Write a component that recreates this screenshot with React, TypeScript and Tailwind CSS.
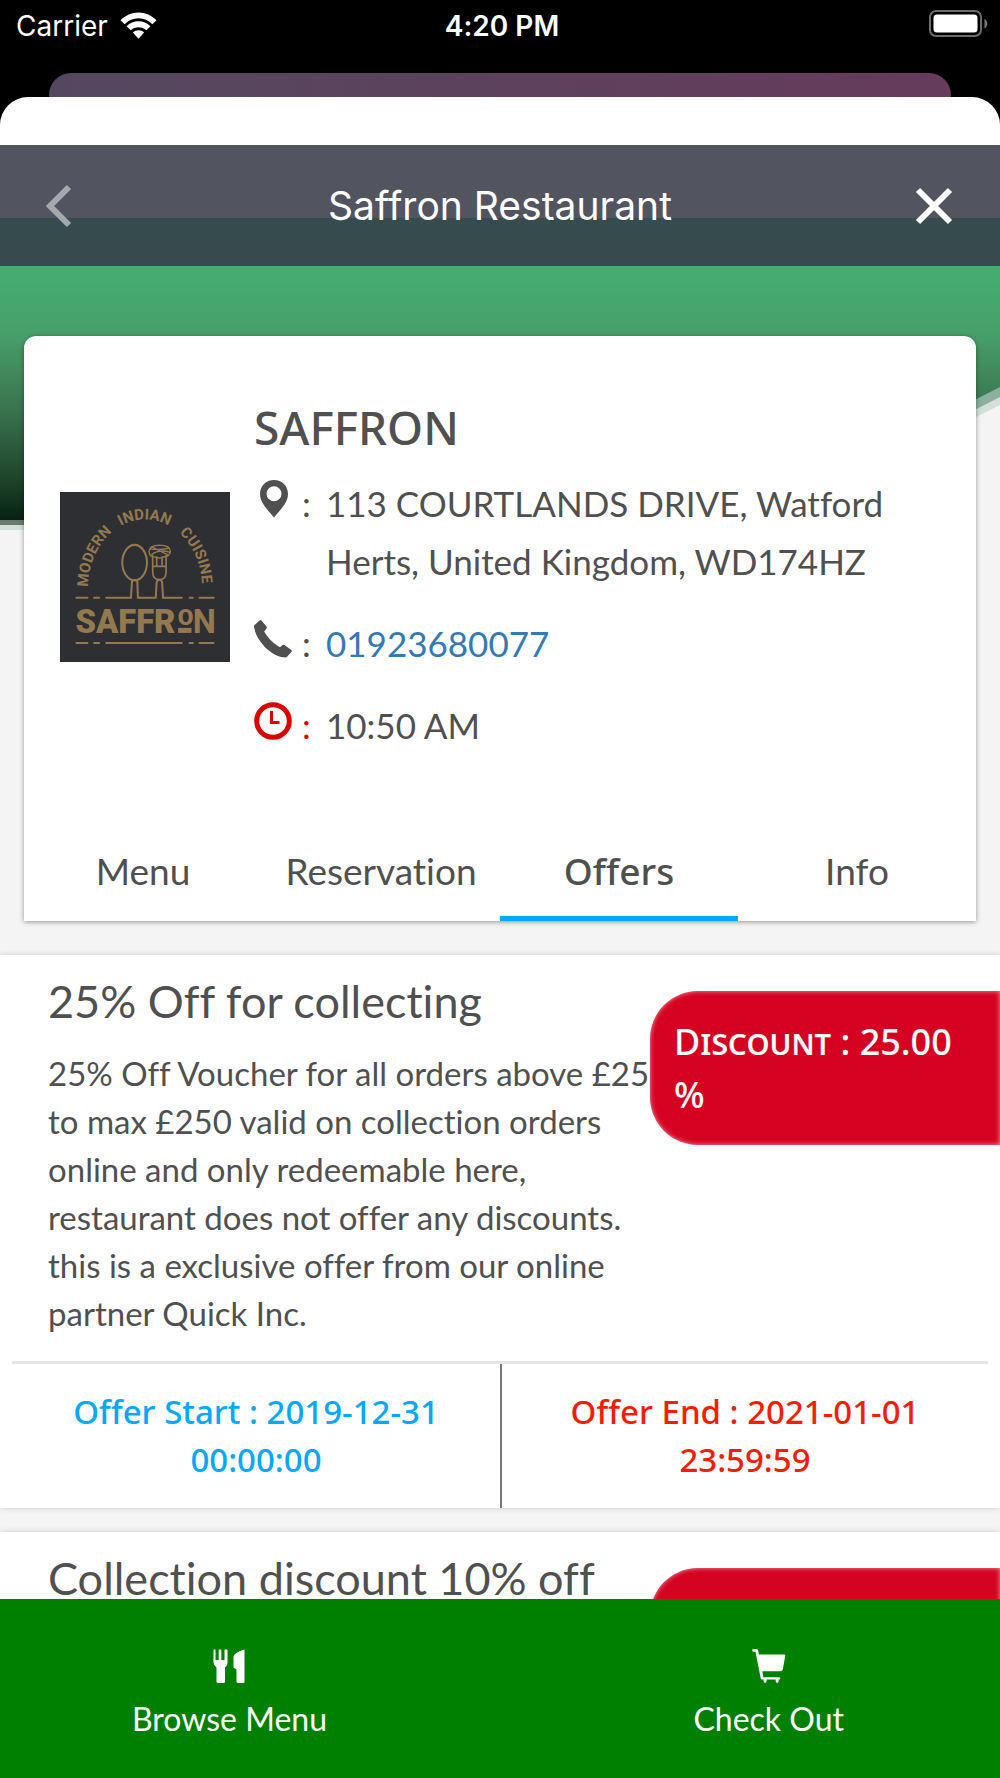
import { useState } from "react";

type Offer = {
  title: string;
  description: string;
  discount: string;
  start: [string, string];
  end: [string, string];
};

const tabs = ["Menu", "Reservation", "Offers", "Info"];

const offers: Offer[] = [
  {
    title: "25% Off for collecting",
    description:
      "25% Off Voucher for all orders above £25 to max £250 valid on collection orders online and only redeemable here, restaurant does not offer any discounts. this is a exclusive offer from our online partner Quick Inc.",
    discount: "25.00",
    start: ["2019-12-31", "00:00:00"],
    end: ["2021-01-01", "23:59:59"],
  },
  {
    title: "Collection discount 10% off",
    description: "",
    discount: "10.00",
    start: ["2019-12-31", "00:00:00"],
    end: ["2021-01-01", "23:59:59"],
  },
];

function WifiIcon() {
  return (
    <svg width="37" height="28" viewBox="0 0 37 28" fill="#fff" aria-hidden="true">
      <path d="M0.5 8.2C5.5 3.2 11.6 0.4 18.5 0.4S31.500 3.2 36.500 8.200L32.400 12.200C28.600 8.500 23.900 6.300 18.500 6.300S8.400 8.500 4.600 12.200Z" />
      <path d="M6.600 14.200C9.900 11.100 13.900 9.300 18.500 9.300S27.100 11.100 30.400 14.200L26.300 18.200C24.100 16.300 21.500 15.200 18.500 15.200S12.900 16.300 10.700 18.200Z" />
      <path d="M12.900 20.400C14.500 19 16.400 18.300 18.500 18.300S22.500 19 24.100 20.400L18.500 26.700Z" />
    </svg>
  );
}

function BatteryIcon() {
  return (
    <svg width="59" height="28" viewBox="0 0 59 28" aria-hidden="true">
      <rect x="1" y="1" width="51" height="25" rx="6" fill="none" stroke="#6b6b6b" strokeWidth="2" />
      <rect x="4.500" y="4.500" width="44" height="18" rx="3.500" fill="#fff" />
      <path d="M55.500 9V18.500C59.200 17 59.200 10.500 55.500 9Z" fill="#7a7a7a" />
    </svg>
  );
}

function MarkerIcon() {
  return (
    <svg className="ml-1.5" width="28" height="38" viewBox="0 0 28 38" fill="currentColor" aria-hidden="true">
      <path
        fillRule="evenodd"
        d="M14 0C6 0 0 6 0 14C0 22 6 28 14 37.500C22 28 28 22 28 14C28 6 22 0 14 0ZM14 6.200A7.500 7.500 0 1 1 14 21.200A7.500 7.500 0 1 1 14 6.200Z"
      />
    </svg>
  );
}

function PhoneIcon() {
  return (
    <svg width="38" height="38" viewBox="0 0 38 38" fill="currentColor" aria-hidden="true">
      <path d="M0.300 5.200L5.600 0.500C6.200 0 7 0 7.500 0.600L12.600 6.700C13 7.300 13 7.900 12.600 8.400L10.200 11.400C13.500 17.500 19.300 23.300 26 27.200L28.600 25.100C29.200 24.700 29.900 24.700 30.500 25L37.300 30C38 30.500 38.100 31.100 37.600 31.700L33.300 36.500C32.500 37.400 31.300 37.500 29.800 37.300C23 36.600 16 32.500 10.500 26.500C4.500 20 0.700 12.800 0.100 6.800C0 6 0 5.600 0.300 5.200Z" />
    </svg>
  );
}

function ClockIcon() {
  return (
    <svg width="38" height="38" viewBox="0 0 38 38" fill="none" stroke="currentColor" aria-hidden="true">
      <circle cx="19" cy="19" r="16.300" strokeWidth="5" />
      <path d="M17.500 9V20.500H25.500" strokeWidth="3" />
    </svg>
  );
}

function CutleryIcon() {
  return (
    <svg width="33" height="34" viewBox="0 0 33 34" fill="#fff" aria-hidden="true">
      <path d="M0.500 1Q1.500-0.500 2.500 1V11H5.700V1Q7-0.500 8.300 1V11H11.500V1Q13-0.500 14.500 1V13Q14.500 17 12 18.500V32.500Q12 34 10.500 34H5Q3.500 34 3.500 32.500V18.500Q0.500 16 0.500 13Z" />
      <path d="M31.500 0.500V32.500Q31.500 34 30 34H25Q23.500 34 23.500 32.500V20.500L20.500 18.500V8Q21.500 3 31.500 0.500Z" />
    </svg>
  );
}

function CartIcon() {
  return (
    <svg width="34" height="34" viewBox="0 0 34 34" fill="#fff" aria-hidden="true">
      <path d="M1.500 0H4.500Q5.600 0 6 1.200L7 5.500H32.500Q33.500 5.500 33.300 6.600L30.800 20.500Q30.300 22.300 28.500 22.300H10.300L11.300 28.200H27Q28.300 28.400 28.300 29.500Q28.300 30.600 27 30.600H26.700V32.300Q26.300 34 25.200 34Q24 34 23.700 32.300V30.600H14.600V32.300Q14.200 34 13.100 34Q12 34 11.600 32.300V30.600H10Q9 30.600 8.700 29.300L3.500 2.700H1.500Q0.200 2.500 0.200 1.300Q0.200 0.200 1.500 0Z" />
    </svg>
  );
}

function SaffronLogo() {
  return (
    <svg className="w-[170px] shrink-0" viewBox="0 0 508 508" role="img" aria-label="Saffron modern Indian cuisine">
      <rect width="508" height="508" fill="#2e2f33" />
      <path id="arc" d="M84 284A170 202 0 0 1 424 284" fill="none" />
      <g fill="#94794f" fontFamily="Roboto, sans-serif" fontWeight="700">
        <g fontSize="45">
          <text><textPath href="#arc" startOffset="0">MODERN</textPath></text>
          <text><textPath href="#arc" startOffset="217">INDIAN</textPath></text>
          <text><textPath href="#arc" startOffset="405">CUISINE</textPath></text>
        </g>
        <text y="420" fontSize="98" fontWeight="900">
          <tspan x="46">SAFFR</tspan>
        </text>
        <text x="352" y="396" fontSize="68" fontWeight="900">O</text>
        <text x="397" y="420" fontSize="98" fontWeight="700">N</text>
        <rect x="353" y="406" width="40" height="15" />
      </g>
      <g fill="none" stroke="#94794f" strokeWidth="6" strokeLinecap="round">
        <ellipse cx="223" cy="211" rx="37" ry="53" />
        <path d="M49 316H82M102 316H117M138 316H212L215 268Q223 258 231 268L233 316H286L289 268Q297 256 305 268L308 316H364M387 316H397M417 316H459" />
        <path d="M49 451H82M102 451H117M138 451H364M387 451H397M417 451H459" />
        <path d="M277 190V238Q277 262 297 262Q317 262 317 238V190M289 196V221M305 196V221M279 222H316" strokeWidth="5" />
        <path d="M266 178Q266 159 298 159Q330 159 330 178Q326 196 306 194Q298 201 288 194Q268 198 266 178ZM268 170Q292 174 326 168M274 187Q296 170 328 180M276 165L322 188" strokeWidth="4" />
      </g>
    </svg>
  );
}

function HeroShape() {
  return (
    <svg
      className="absolute inset-x-0 top-0 h-[264px] w-full"
      viewBox="0 0 1000 264"
      preserveAspectRatio="none"
      aria-hidden="true"
    >
      <defs>
        <linearGradient id="hero" x1="0" y1="0" x2="0" y2="1">
          <stop offset="0" stopColor="#44ae71" />
          <stop offset="0.280" stopColor="#489e69" />
          <stop offset="0.560" stopColor="#3a7450" />
          <stop offset="0.850" stopColor="#1d4229" />
          <stop offset="1" stopColor="#062311" />
        </linearGradient>
      </defs>
      <path d="M0 0H1000V139L750 264H0Z" fill="#d3dfd9" />
      <path d="M0 0H1000V131L750 259H0Z" fill="#8bb09b" />
      <path d="M0 254H700V259H0Z" fill="#6a7a70" />
      <path d="M0 0H1000V121L740 254H0Z" fill="url(#hero)" />
    </svg>
  );
}

function OfferCard({ offer }: { offer: Offer }) {
  return (
    <article className="bg-white shadow-[0_0_6px_rgba(0,0,0,0.16)]">
      <div className="flex items-start pb-6">
        <div className="flex-1 pt-[22px] pl-12">
          <h2 className="text-[45px] leading-[48px]">{offer.title}</h2>
          <p className="mt-6 text-[33px] leading-[48px]">{offer.description}</p>
        </div>
        <p className="mt-9 w-[35%] rounded-l-[48px] bg-[#d50321] px-6 py-6 font-['Noto_Sans'] text-[36px] leading-[53px] font-medium text-white shadow-[inset_0_0_5px_rgba(255,255,255,0.6)] [font-variant-caps:small-caps]">
          Discount : {offer.discount} %
        </p>
      </div>
      <div className="mx-3 grid grid-cols-2 border-t-3 border-[#e5e5e5] text-center font-['Noto_Sans'] text-[33px] leading-[48px] font-medium">
        <p className="py-6 text-[#03a8ff]">
          Offer Start : {offer.start[0]}
          <br />
          {offer.start[1]}
        </p>
        <p className="border-l-2 border-[#777] py-6 text-[#f91d00]">
          Offer End : {offer.end[0]}
          <br />
          {offer.end[1]}
        </p>
      </div>
    </article>
  );
}

export default function App() {
  const [activeTab, setActiveTab] = useState("Offers");

  return (
    <div className="flex h-screen flex-col bg-black font-['Lato',sans-serif] text-[#505050] [font-variant-ligatures:none]">
      <div className="grid h-[73px] shrink-0 grid-cols-3 items-start pt-[10px] pr-3 pl-4 font-['Inter'] text-[28px] leading-[32px] text-white">
        <div className="flex items-center gap-3">
          <span>Carrier</span>
          <WifiIcon />
        </div>
        <span className="text-center font-semibold">4:20 PM</span>
        <div className="flex justify-end">
          <BatteryIcon />
        </div>
      </div>
      <div className="mx-[49px] h-6 shrink-0 rounded-t-[22px] bg-linear-to-r from-[#54485f] to-[#663b5b]" />

      <div className="flex min-h-0 flex-1 flex-col overflow-hidden rounded-t-[28px] bg-white pt-12">
        <header className="flex h-[121px] shrink-0 items-center justify-between bg-[linear-gradient(#525560_60%,#364c4e_60%,#384a4e)] px-11 text-white">
          <button aria-label="Back" className="w-11 text-[#a5a9ac]">
            <svg width="28" height="44" viewBox="0 0 28 44" fill="none" stroke="currentColor" strokeWidth="6">
              <path d="M25 3L6 22L25 41" />
            </svg>
          </button>
          <h1 className="font-['Inter'] text-[39px] leading-[48px]">Saffron Restaurant</h1>
          <button aria-label="Close" className="w-11">
            <svg width="44" height="44" viewBox="0 0 44 44" fill="none" stroke="currentColor" strokeWidth="6">
              <path d="M6 6L38 38M38 6L6 38" />
            </svg>
          </button>
        </header>

        <main className="relative flex-1 overflow-y-auto bg-[#f4f4f4] [scrollbar-width:none]">
          <HeroShape />
          <section className="relative mx-6 mt-[70px] rounded-t-xl bg-white pt-16 shadow-[0_1px_5px_rgba(0,0,0,0.4)]">
            <div className="flex items-center gap-6 px-9">
              <SaffronLogo />
              <div>
                <h2 className="mb-5 font-['Noto_Sans'] text-[46px] leading-[54px] font-medium">SAFFRON</h2>
                <ul className="flex flex-col gap-6 text-[35px] leading-[58px]">
                  <li className="flex">
                    <span className="w-12 pt-1.5"><MarkerIcon /></span>
                    <span className="w-6">:</span>
                    <address className="not-italic">
                      113 COURTLANDS DRIVE, Watford
                      <br />
                      Herts, United Kingdom, WD174HZ
                    </address>
                  </li>
                  <li className="flex">
                    <span className="w-12 pt-1.5"><PhoneIcon /></span>
                    <span className="w-6">:</span>
                    <a href="tel:01923680077" className="text-[#337ab7]">01923680077</a>
                  </li>
                  <li className="flex">
                    <span className="w-12 pt-1.5 text-[#dd0000]"><ClockIcon /></span>
                    <span className="w-6 text-[#dd0000]">:</span>
                    <span>10:50 AM</span>
                  </li>
                </ul>
              </div>
            </div>
            <nav className="mt-[71px] grid grid-cols-4">
              {tabs.map((tab) => (
                <button
                  key={tab}
                  onClick={() => setActiveTab(tab)}
                  className={
                    tab === activeTab
                      ? "h-24 border-b-5 border-[#03a8ff] font-['Noto_Sans'] text-[37px] font-medium"
                      : "h-24 pb-1 text-[37px]"
                  }
                >
                  {tab}
                </button>
              ))}
            </nav>
          </section>

          <div className="relative mt-[34px] flex flex-col gap-6">
            {offers.map((offer) => (
              <OfferCard key={offer.title} offer={offer} />
            ))}
          </div>
        </main>

        <footer className="flex h-[179px] shrink-0 items-start justify-between bg-[#008000] px-[132px] pt-[50px] text-[32px] leading-[40px] text-white">
          <button className="flex flex-col items-center gap-4">
            <CutleryIcon />
            Browse Menu
          </button>
          <button className="mr-6 flex flex-col items-center gap-4">
            <CartIcon />
            Check Out
          </button>
        </footer>
      </div>
    </div>
  );
}
